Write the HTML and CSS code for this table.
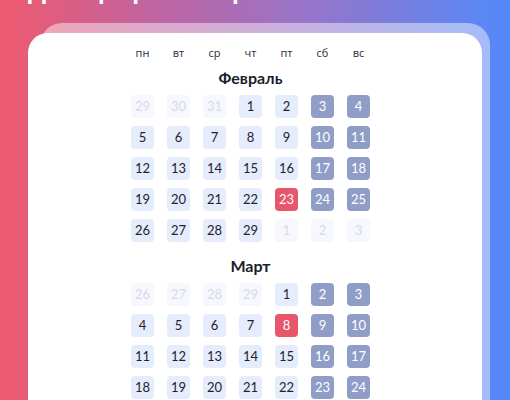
FILE: index.html
```html
<!DOCTYPE html>
<html>
<head>
    <meta charset="utf-8">
    <link rel="stylesheet" href="styles.css">
</head>
<body>
    <h1 class="title">Дни в феврале и марте 2024</h1>

    <div class="stack">
        <div class="card">
            <div class="grid weekdays">
                <span>пн</span><span>вт</span><span>ср</span><span>чт</span><span>пт</span><span>сб</span><span>вс</span>
            </div>

            <h2 class="month">Февраль</h2>
            <div class="grid days">
                <span class="day out">29</span><span class="day out">30</span><span class="day out">31</span><span class="day">1</span><span class="day">2</span><span class="day off">3</span><span class="day off">4</span>
                <span class="day">5</span><span class="day">6</span><span class="day">7</span><span class="day">8</span><span class="day">9</span><span class="day off">10</span><span class="day off">11</span>
                <span class="day">12</span><span class="day">13</span><span class="day">14</span><span class="day">15</span><span class="day">16</span><span class="day off">17</span><span class="day off">18</span>
                <span class="day">19</span><span class="day">20</span><span class="day">21</span><span class="day">22</span><span class="day holiday">23</span><span class="day off">24</span><span class="day off">25</span>
                <span class="day">26</span><span class="day">27</span><span class="day">28</span><span class="day">29</span><span class="day out">1</span><span class="day out">2</span><span class="day out">3</span>
            </div>

            <h2 class="month march">Март</h2>
            <div class="grid days">
                <span class="day out">26</span><span class="day out">27</span><span class="day out">28</span><span class="day out">29</span><span class="day">1</span><span class="day off">2</span><span class="day off">3</span>
                <span class="day">4</span><span class="day">5</span><span class="day">6</span><span class="day">7</span><span class="day holiday">8</span><span class="day off">9</span><span class="day off">10</span>
                <span class="day">11</span><span class="day">12</span><span class="day">13</span><span class="day">14</span><span class="day">15</span><span class="day off">16</span><span class="day off">17</span>
                <span class="day">18</span><span class="day">19</span><span class="day">20</span><span class="day">21</span><span class="day">22</span><span class="day off">23</span><span class="day off">24</span>
            </div>
        </div>
    </div>
</body>
</html>
```

FILE: styles.css
```css
html, body {
    margin: 0;
    height: 100%;
    overflow: hidden;
}

body {
    width: 510px;
    height: 400px;
    background: linear-gradient(90deg, #ef5a6f 0%, #c064a0 30%, #9a74c6 58%, #5389fa 100%);
    font-family: Lato, "Open Sans", sans-serif;
}

.title {
    margin: -22px 0 0 28px;
    font-size: 22px;
    line-height: 28px;
    font-weight: 800;
    color: #fff;
    white-space: nowrap;
}

.stack {
    position: relative;
    margin: 17px 0 0 28px;
    width: 454px;
    padding-top: 10px;
}

/* the second card peeking out behind */
.stack::before {
    content: "";
    position: absolute;
    top: 0;
    left: 12px;
    right: -8px;
    bottom: 0;
    border-radius: 22px 22px 0 0;
    background: rgba(255, 255, 255, 0.45);
}

.card {
    position: relative;
    height: 367px;
    overflow: hidden;
    background: #fff;
    border-radius: 20px 20px 0 0;
    padding-top: 13px;
    box-sizing: border-box;
}

.grid {
    display: grid;
    grid-template-columns: repeat(7, 23px);
    column-gap: 13px;
    margin-left: 103px;
    width: 239px;
}

.weekdays span {
    font-family: "Open Sans", sans-serif;
    font-size: 11px;
    line-height: 14px;
    color: #2a2d38;
    text-align: center;
}

.month {
    margin: 8px 0 7px 103px;
    width: 239px;
    text-align: center;
    font-size: 16px;
    line-height: 20px;
    font-weight: 700;
    color: #1b1d2a;
}

.month.march {
    margin-top: 14px;
}

.days {
    row-gap: 8px;
}

.day {
    height: 23px;
    border-radius: 4px;
    background: #e5ecfb;
    color: #1f2230;
    font-size: 13px;
    line-height: 23px;
    text-align: center;
}

.day.off {
    background: #8f9dc7;
    color: #fff;
}

.day.holiday {
    background: #e8566b;
    color: #fff;
}

.day.out {
    background: #f6f8fe;
    color: #d6dae6;
}
```
